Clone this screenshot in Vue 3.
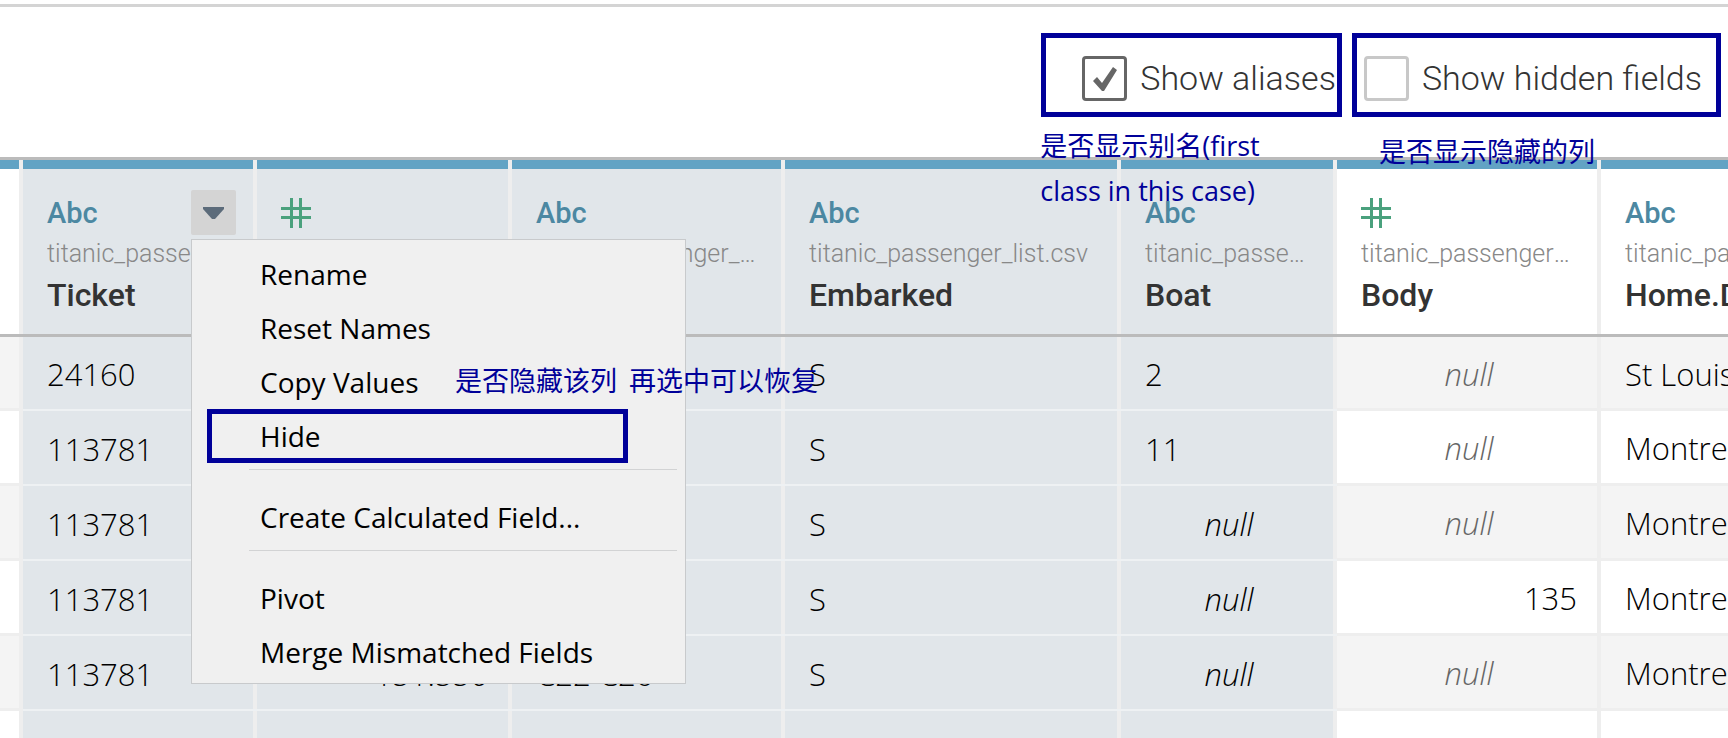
<script setup>
import { ref } from 'vue'

const showAliases = ref(true)
const showHidden = ref(false)

const source = 'titanic_passenger_list.csv'
const columns = [
  { key: 'edge', cls: 'w-edge' },
  { key: 'ticket', cls: 'w-ticket', type: 'text', name: 'Ticket', source, tinted: true, open: true },
  { key: 'fare', cls: 'w-fare', type: 'number', name: '', tinted: true },
  { key: 'cabin', cls: 'w-cabin', type: 'text', name: '', source, tinted: true },
  { key: 'embarked', cls: 'w-embarked', type: 'text', name: 'Embarked', source, tinted: true },
  { key: 'boat', cls: 'w-boat', type: 'text', name: 'Boat', source, tinted: true },
  { key: 'body', cls: 'w-body', type: 'number', name: 'Body', source },
  { key: 'home', cls: 'w-home', type: 'text', name: 'Home.Dest', source },
]

const rows = [
  { ticket: '24160', embarked: 'S', boat: '2', body: null, home: 'St Louis, MO' },
  { ticket: '113781', embarked: 'S', boat: '11', body: null, home: 'Montreal, PQ' },
  { ticket: '113781', embarked: 'S', boat: null, body: null, home: 'Montreal, PQ' },
  { ticket: '113781', embarked: 'S', boat: null, body: '135', home: 'Montreal, PQ' },
  { ticket: '113781', fare: '151.550', cabin: 'C22 C26', embarked: 'S', boat: null, body: null, home: 'Montreal, PQ' },
  {},
]

const menu = [
  ['Rename', 'Reset Names', 'Copy Values', 'Hide'],
  ['Create Calculated Field...'],
  ['Pivot', 'Merge Mismatched Fields'],
]
</script>

<template>
  <main class="page">
    <header class="toolbar">
      <div class="option">
        <label class="check aliases">
          <input v-model="showAliases" type="checkbox" />
          <svg v-if="showAliases" class="tick" viewBox="0 0 45 45" aria-hidden="true">
            <path d="M11 25 L15 21 L20 27 L31 11 L35 14 L22 35 L20 35 Z" />
          </svg>
          <span>Show aliases</span>
        </label>
        <p class="note note-aliases">是否显示别名(first<br />class in this case)</p>
      </div>
      <div class="option">
        <label class="check">
          <input v-model="showHidden" type="checkbox" />
          <span>Show hidden fields</span>
        </label>
        <p class="note note-hidden">是否显示隐藏的列</p>
      </div>
    </header>

    <section class="grid">
      <table>
        <colgroup>
          <col v-for="c in columns" :key="c.key" :class="c.cls" />
        </colgroup>
        <thead>
          <tr>
            <th v-for="c in columns" :key="c.key" :class="{ tinted: c.tinted }" scope="col">
              <div v-if="c.type" class="head">
                <div class="type-row">
                  <span v-if="c.type === 'text'" class="abc">Abc</span>
                  <svg v-else class="hash" viewBox="0 0 30 30" aria-hidden="true">
                    <path d="M9 0h3v30H9zM18 0h3v30h-3zM0 9h30v3H0zM0 18h30v3H0z" />
                  </svg>
                  <button v-if="c.open" type="button" class="drop" aria-label="Column menu">
                    <svg viewBox="0 0 21 12" aria-hidden="true"><path d="M0 0h21v2L12 12H9L0 2z" /></svg>
                  </button>
                </div>
                <div class="source">{{ c.source }}</div>
                <div class="name">{{ c.name }}</div>
              </div>
            </th>
          </tr>
        </thead>
        <tbody>
          <tr v-for="(r, i) in rows" :key="i">
            <td
              v-for="c in columns"
              :key="c.key"
              :class="{ tinted: c.tinted, number: c.type === 'number', empty: r[c.key] === null }"
            >{{ r[c.key] === null ? 'null' : r[c.key] }}</td>
          </tr>
        </tbody>
      </table>

      <div class="menu" role="menu">
        <div v-for="(group, g) in menu" :key="g" class="group">
          <button
            v-for="item in group"
            :key="item"
            type="button"
            role="menuitem"
            :class="{ marked: item === 'Hide' }"
          >{{ item }}</button>
        </div>
        <p class="note note-menu"><span>是否隐藏该列</span><span>再选中可以恢复</span></p>
      </div>
    </section>
  </main>
</template>

<style>
body {
  margin: 0;
  background: #fff;
}
</style>

<style scoped>
.page {
  height: calc(100vh - 4px);
  display: flex;
  flex-direction: column;
  overflow: hidden;
  box-sizing: border-box;
  border-top: 3px solid #d4d4d4;
  margin-top: 4px;
  font-family: Roboto, "Noto Sans CJK SC", sans-serif;
  color: #333;
}
.toolbar {
  flex: none;
  display: flex;
  justify-content: flex-end;
  align-items: flex-start;
  gap: 10px;
  height: 150px;
  padding: 26px 7px 0 0;
  box-sizing: border-box;
}
.option {
  position: relative;
}
.check {
  position: relative;
  display: flex;
  align-items: center;
  height: 84px;
  box-sizing: border-box;
  border: 5px solid #000099;
  padding: 6px 14px 0 7px;
  gap: 13px;
  font-size: 34px;
  font-weight: 300;
  white-space: nowrap;
}
.aliases {
  padding: 6px 1px 0 36px;
}
.check input {
  appearance: none;
  width: 45px;
  height: 45px;
  margin: 0;
  border: 3px solid #c8c8c8;
  border-radius: 4px;
  background: #fff;
}
.check input:checked {
  border-color: #666;
}
.tick {
  position: absolute;
  left: 36px;
  width: 45px;
  height: 45px;
  fill: #666;
  pointer-events: none;
}
.note {
  position: absolute;
  z-index: 3;
  margin: 0;
  font-family: "Open Sans", "Noto Sans CJK SC", sans-serif;
  font-size: 27px;
  font-weight: 400;
  line-height: 45px;
  color: #000099;
  white-space: nowrap;
}
.note-aliases {
  left: -1px;
  top: 90px;
}
.note-hidden {
  left: 27px;
  top: 96px;
}

.grid {
  position: relative;
  flex: 1;
  overflow: hidden;
  border-top: 3px solid #bbb;
}
table {
  table-layout: fixed;
  width: 1901px;
  border-collapse: separate;
  border-spacing: 0;
}
.w-edge { width: 23px; }
.w-ticket { width: 234px; }
.w-fare { width: 255px; }
.w-cabin { width: 273px; }
.w-embarked { width: 336px; }
.w-boat { width: 216px; }
.w-body { width: 264px; }
.w-home { width: 300px; }

th {
  padding: 0;
  height: 174px;
  vertical-align: top;
  text-align: left;
  font-weight: 400;
  border-bottom: 3px solid #bbb;
  background:
    linear-gradient(#eee, #eee) right / 4px 100% no-repeat,
    linear-gradient(#62a3c4, #62a3c4) top / 100% 9px no-repeat,
    #fff;
}
th.tinted {
  background-color: #e1e6ea;
}
.head {
  padding: 30px 21px 0 24px;
}
.type-row {
  display: flex;
  align-items: center;
  justify-content: space-between;
  height: 45px;
}
.abc {
  font-size: 29px;
  font-weight: 500;
  color: #4c88a2;
}
.hash {
  width: 30px;
  height: 30px;
  fill: #4aa17d;
}
.drop {
  display: flex;
  align-items: center;
  justify-content: center;
  width: 45px;
  height: 45px;
  padding: 0;
  border: 0;
  border-radius: 2px;
  background: #d4d4d4;
}
.drop svg {
  width: 21px;
  height: 12px;
  fill: #5c6b7a;
}
.source {
  margin-right: 5px;
  overflow: hidden;
  text-overflow: ellipsis;
  white-space: nowrap;
  font-size: 25px;
  font-weight: 300;
  height: 38px;
  line-height: 38px;
  color: #888;
}
.name {
  overflow: hidden;
  white-space: nowrap;
  font-size: 32px;
  font-weight: 500;
  line-height: 44px;
}

td {
  box-sizing: border-box;
  height: 75px;
  padding: 2px 24px 0 24px;
  overflow: hidden;
  border-bottom: 3px solid #eee;
  background: linear-gradient(#eee, #eee) right / 4px 100% no-repeat, #fff;
  font-family: "Open Sans", sans-serif;
  font-size: 31px;
  font-weight: 300;
  line-height: 42px;
  white-space: nowrap;
  color: #000;
}
tbody tr:first-child td {
  height: 74px;
}
tbody tr:nth-child(odd) td {
  background-color: #f4f4f4;
}
tbody tr td.tinted {
  background-color: #e1e6ea;
  border-bottom: 2px solid #eef1f3;
}
td.number {
  text-align: right;
}
td.empty {
  text-align: center;
  font-style: italic;
}
td.number.empty {
  color: #666;
}

.menu {
  position: absolute;
  left: 191px;
  top: 79px;
  z-index: 2;
  width: 495px;
  box-sizing: border-box;
  padding: 7px 8px 4px 15px;
  border: 1px solid #c8cacc;
  background: #f0f0f0;
}
.group + .group {
  position: relative;
  padding-top: 27px;
}
.group + .group::before {
  content: "";
  position: absolute;
  left: 42px;
  right: 0;
  top: 6px;
  height: 1px;
  background: #d2d3d4;
}
.menu button {
  display: block;
  width: 421px;
  height: 54px;
  box-sizing: border-box;
  padding: 0 0 0 48px;
  border: 5px solid transparent;
  background: none;
  font-family: "Open Sans", sans-serif;
  font-size: 28px;
  line-height: 42px;
  text-align: left;
  white-space: nowrap;
  color: #000;
}
.menu .marked {
  border-color: #000099;
}
.note-menu {
  left: 263px;
  top: 118px;
  display: flex;
  gap: 12px;
}
</style>
